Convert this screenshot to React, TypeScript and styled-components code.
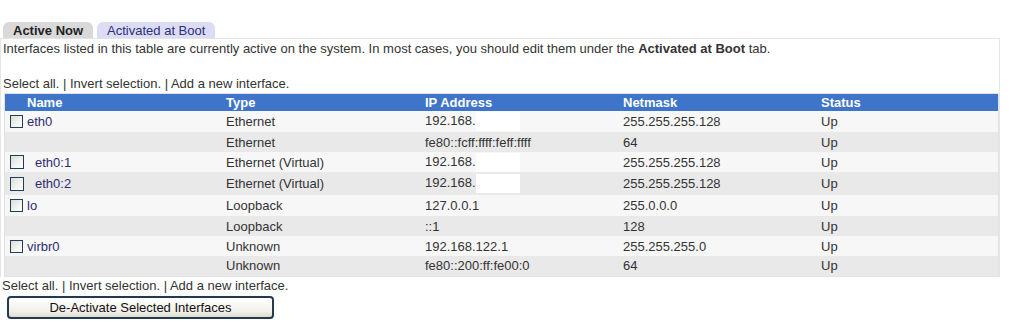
import { FC } from 'react'
import styled, { createGlobalStyle } from 'styled-components'

const GlobalStyle = createGlobalStyle`
  body {
    margin: 0;
    background: #fff;
    font-family: "Liberation Sans", Arial, sans-serif;
    font-size: 13px;
    color: #333;
  }
`

const Page = styled.div`
  width: 1012px;
  height: 329px;
  padding-top: 22px;
  box-sizing: border-box;
`

const Tabs = styled.div`
  display: flex;
  gap: 4px;
  padding-left: 3px;
  height: 16px;
`

const Tab = styled.div<{ $active?: boolean }>`
  height: 16px;
  line-height: 17px;
  padding: 0 10px;
  border-radius: 6px 6px 0 0;
  font-size: 13px;
  background: ${p => (p.$active ? '#d9d9d9' : '#dcdcf5')};
  color: ${p => (p.$active ? '#222' : '#2e2e7a')};
  font-weight: ${p => (p.$active ? 'bold' : 'normal')};
`

const Panel = styled.div`
  width: 1000px;
  box-sizing: border-box;
  border: 1px solid #e6e6e6;
  border-bottom: none;
  padding: 2px 2px 0 2px;
`

const Intro = styled.div`
  line-height: 15px;
  margin-bottom: 20px;
`

const Links = styled.div`
  line-height: 15px;
  margin-bottom: 2px;
`

const Link = styled.span`
  color: #333;
`

const Table = styled.table`
  width: 995px;
  border-collapse: collapse;
  border: 1px solid #e2e2e2;
  margin-left: 1px;
`

const Th = styled.th`
  background: #3f75c9;
  color: #fff;
  font-weight: bold;
  text-align: left;
  height: 17px;
  line-height: 17px;
  padding: 0;
  font-size: 13px;
`

const Tr = styled.tr<{ $alt?: boolean; $h: number }>`
  background: ${p => (p.$alt ? '#e9e9e9' : '#f7f7f7')};
  height: ${p => p.$h}px;
`

const Td = styled.td<{ $w?: number }>`
  padding: 0;
  width: ${p => (p.$w ? `${p.$w}px` : 'auto')};
  vertical-align: middle;
  white-space: nowrap;
  line-height: 15px;
`

const CheckCell = styled.td`
  width: 17px;
  padding: 0 0 0 5px;
  vertical-align: middle;
`

const Check = styled.span<{ $big?: boolean }>`
  display: block;
  width: ${p => (p.$big ? 12 : 11)}px;
  height: ${p => (p.$big ? 12 : 11)}px;
  border: 1px solid #1f3e5c;
  background: linear-gradient(135deg, #dcdcd6 0%, #f4f4f0 60%, #ffffff 100%);
`

const IfName = styled.span<{ $indent?: boolean }>`
  color: #2d2d6e;
  padding-left: ${p => (p.$indent ? 8 : 0)}px;
`

const Redact = styled.span`
  display: inline-block;
  width: 44px;
  height: 19px;
  background: #fff;
  vertical-align: middle;
`

const Bottom = styled.div`
  line-height: 15px;
  padding: 1px 0 0 2px;
`

const Button = styled.button`
  display: block;
  margin: 3px 0 0 7px;
  width: 267px;
  height: 23px;
  border: 2px solid #223a4f;
  border-radius: 4px;
  background: linear-gradient(#ffffff, #f1f0ea 70%, #dedbd0);
  font-family: "Liberation Sans", Arial, sans-serif;
  font-size: 13px;
  color: #111;
  padding: 0;
`

type Row = {
  check?: 'big' | 'small'
  name?: string
  indent?: boolean
  type: string
  ip: string
  redact?: boolean
  mask: string
  h: number
}

const rows: Row[] = [
  { check: 'small', name: 'eth0', type: 'Ethernet', ip: '192.168.', redact: true, mask: '255.255.255.128', h: 21 },
  { type: 'Ethernet', ip: 'fe80::fcff:ffff:feff:ffff', mask: '64', h: 20 },
  { check: 'big', name: 'eth0:1', indent: true, type: 'Ethernet (Virtual)', ip: '192.168.', redact: true, mask: '255.255.255.128', h: 20 },
  { check: 'big', name: 'eth0:2', indent: true, type: 'Ethernet (Virtual)', ip: '192.168.', redact: true, mask: '255.255.255.128', h: 23 },
  { check: 'small', name: 'lo', type: 'Loopback', ip: '127.0.0.1', mask: '255.0.0.0', h: 21 },
  { type: 'Loopback', ip: '::1', mask: '128', h: 20 },
  { check: 'small', name: 'virbr0', type: 'Unknown', ip: '192.168.122.1', mask: '255.255.255.0', h: 20 },
  { type: 'Unknown', ip: 'fe80::200:ff:fe00:0', mask: '64', h: 20 },
]

const SelectLinks: FC = () => (
  <>
    <Link>Select all.</Link> | <Link>Invert selection.</Link> | <Link>Add a new interface.</Link>
  </>
)

const App: FC = () => {
  return (
    <Page>
      <GlobalStyle />
      <Tabs>
        <Tab $active>Active Now</Tab>
        <Tab>Activated at Boot</Tab>
      </Tabs>
      <Panel>
        <Intro>
          Interfaces listed in this table are currently active on the system. In most cases, you should edit them
          under the <b>Activated at Boot</b> tab.
        </Intro>
        <Links>
          <SelectLinks />
        </Links>
        <Table>
          <thead>
            <tr>
              <Th style={{ width: 22 }} />
              <Th>Name</Th>
              <Th>Type</Th>
              <Th>IP Address</Th>
              <Th>Netmask</Th>
              <Th>Status</Th>
            </tr>
          </thead>
          <tbody>
            {rows.map((r, i) => (
              <Tr key={i} $alt={i % 2 === 1} $h={r.h}>
                <CheckCell>{r.check && <Check $big={r.check === 'big'} />}</CheckCell>
                <Td $w={199}>{r.name && <IfName $indent={r.indent}>{r.name}</IfName>}</Td>
                <Td $w={199}>{r.type}</Td>
                <Td $w={198}>
                  {r.ip}
                  {r.redact && <Redact />}
                </Td>
                <Td $w={198}>{r.mask}</Td>
                <Td>Up</Td>
              </Tr>
            ))}
          </tbody>
        </Table>
      </Panel>
      <Bottom>
        <SelectLinks />
      </Bottom>
      <Button>De-Activate Selected Interfaces</Button>
    </Page>
  )
}

export default App
